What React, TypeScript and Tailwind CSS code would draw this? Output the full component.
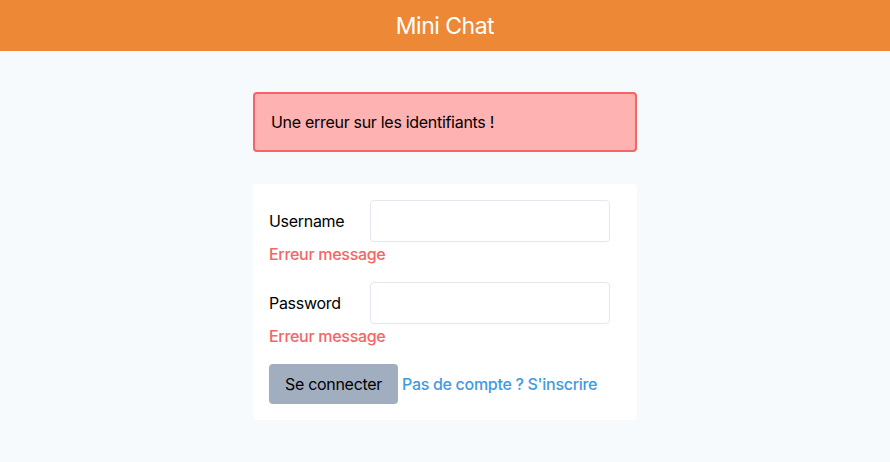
export default function App() {
  return (
    <div className="min-h-[462px] bg-[#f7fafc] font-['Inter',sans-serif] tracking-[-0.3px] text-black">
      {/* Header */}
      <header className="h-[51px] bg-[#ed8936] flex items-center justify-center pt-[2px]">
        <h1 className="text-white text-[23px] tracking-[-0.5px]">Mini Chat</h1>
      </header>

      <div className="w-[384px] mx-auto pt-[41px]">
        {/* Alert */}
        <div className="h-[60px] bg-[#feb2b2] border-2 border-[#f56565] rounded px-4 flex items-center">
          <p className="text-base">Une erreur sur les identifiants !</p>
        </div>

        {/* Form */}
        <form className="mt-8 bg-white rounded p-4">
          <div className="flex items-center">
            <label className="w-[101px]">Username</label>
            <input className="w-[240px] h-[42px] border border-[#e2e8f0] rounded px-3" />
          </div>
          <p className="text-[#f56565] font-medium leading-6 mb-4">Erreur message</p>

          <div className="flex items-center">
            <label className="w-[101px]">Password</label>
            <input type="password" className="w-[240px] h-[42px] border border-[#e2e8f0] rounded px-3" />
          </div>
          <p className="text-[#f56565] font-medium leading-6 mb-4">Erreur message</p>

          <div className="flex items-center">
            <button type="button" className="h-10 w-[129px] bg-[#a0aec0] rounded">Se connecter</button>
            <a href="#" className="ml-1 text-[#4299e1] font-medium">Pas de compte ? S'inscrire</a>
          </div>
        </form>
      </div>
    </div>
  );
}
